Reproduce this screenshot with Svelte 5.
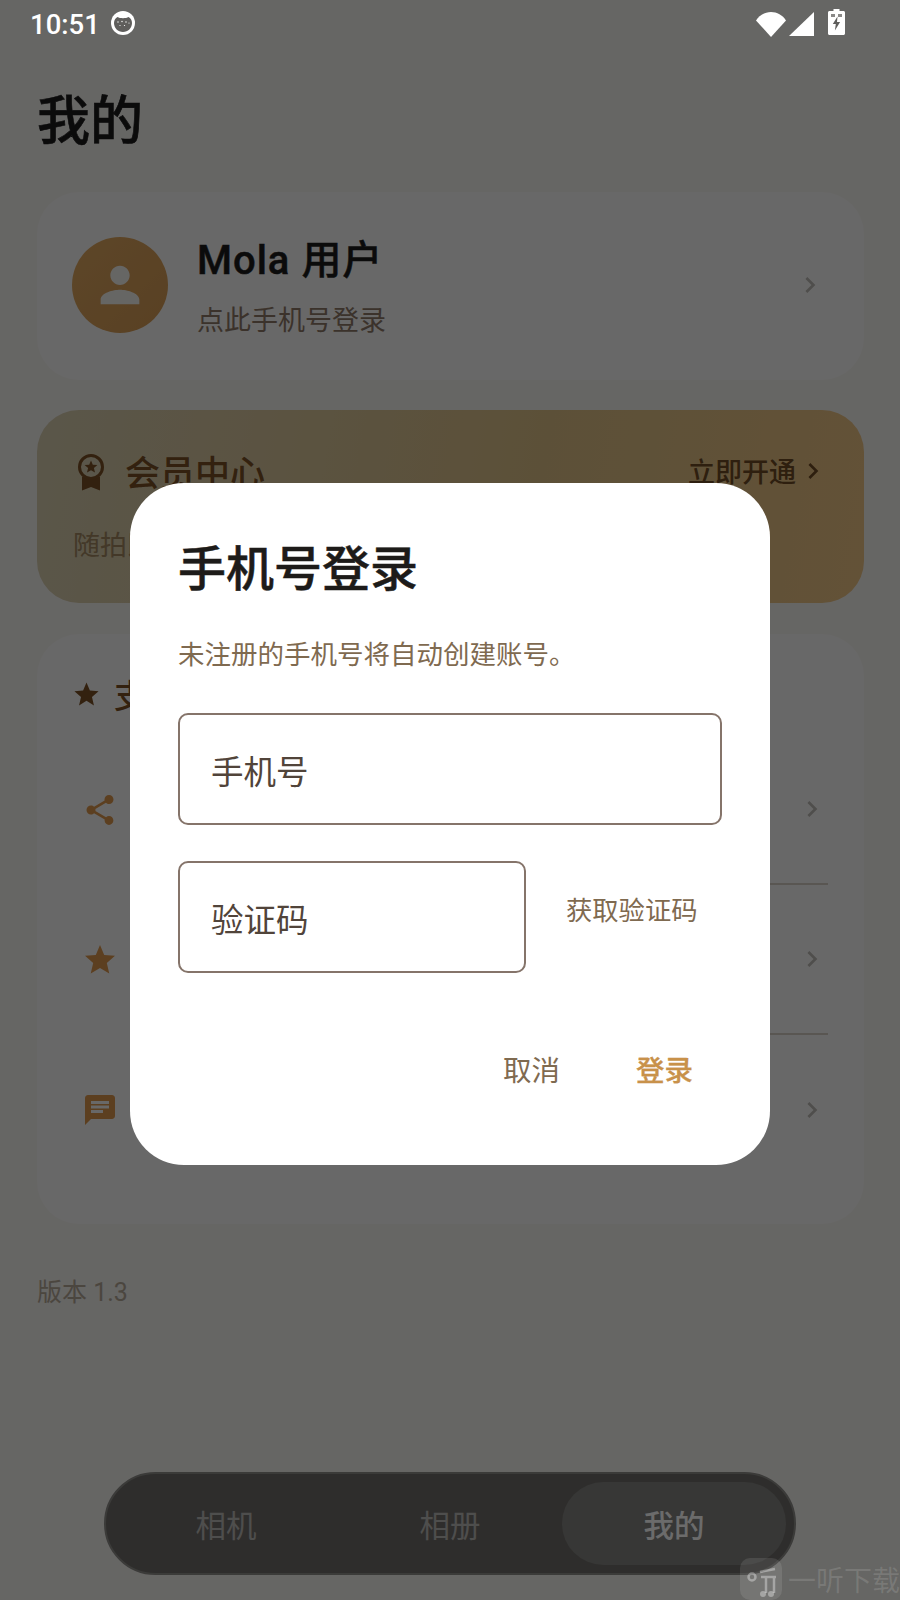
<script>
  const tabs = [
    { label: '相机', active: false },
    { label: '相册', active: false },
    { label: '我的', active: true }
  ];

  const person = 'M12 12c2.21 0 4-1.79 4-4s-1.79-4-4-4-4 1.79-4 4 1.79 4 4 4zm0 2c-2.67 0-8 1.34-8 4v2h16v-2c0-2.66-5.33-4-8-4z';
  const chevron = 'M10 6L8.59 7.41 13.17 12l-4.58 4.59L10 18l6-6z';
  const star = 'M12 17.27L18.18 21l-1.64-7.03L22 9.24l-7.19-.61L12 2 9.19 8.63 2 9.24l5.46 4.73L5.82 21z';
  const share = 'M18 16.08c-.76 0-1.44.3-1.96.77L8.91 12.7c.05-.23.09-.46.09-.7s-.04-.47-.09-.7l7.05-4.11c.54.5 1.25.81 2.04.81 1.66 0 3-1.34 3-3s-1.34-3-3-3-3 1.34-3 3c0 .24.04.47.09.7L8.04 9.81C7.5 9.31 6.79 9 6 9c-1.66 0-3 1.34-3 3s1.34 3 3 3c.79 0 1.5-.31 2.04-.81l7.12 4.16c-.05.21-.08.43-.08.65 0 1.61 1.31 2.92 2.92 2.92 1.61 0 2.92-1.31 2.92-2.92s-1.31-2.92-2.92-2.92z';
  const chat = 'M20 2H4c-1.1 0-1.99.9-1.99 2L2 22l4-4h14c1.1 0 2-.9 2-2V4c0-1.1-.9-2-2-2zM6 9h12v2H6V9zm8 5H6v-2h8v2zm4-6H6V6h12v2z';

  const rows = [
    { icon: share, label: '分享给朋友' },
    { icon: star, label: '给我们好评' },
    { icon: chat, label: '意见反馈' }
  ];
</script>

<div class="phone">
  <div class="page">
    <h1>我的</h1>

    <section class="card user">
      <div class="avatar">
        <svg viewBox="0 0 24 24" width="58" height="58"><path d={person} fill="#f4f2ef" /></svg>
      </div>
      <div class="who">
        <div class="name">Mola 用户</div>
        <div class="hint">点此手机号登录</div>
      </div>
      <svg class="chev" viewBox="0 0 24 24" width="32" height="32"><path d={chevron} /></svg>
    </section>

    <section class="member">
      <div class="member-top">
        <svg class="medal" viewBox="0 0 28 38" width="28" height="38">
          <path d="M5 24v13.500l9-3.500 9 3.500V24z" fill="#7a4f24" />
          <circle cx="14" cy="14" r="11.500" fill="#d6cdb0" stroke="#7a4f24" stroke-width="3" />
          <path d="M14 7.500l1.800 4.200 4.600.4-3.500 3 1.100 4.500-4-2.400-4 2.400 1.100-4.500-3.500-3 4.600-.4z" fill="#7a4f24" />
        </svg>
        <span class="member-title">会员中心</span>
        <span class="open">立即开通</span>
        <svg class="open-chev" viewBox="0 0 24 24" width="32" height="32"><path d={chevron} /></svg>
      </div>
      <p class="member-desc">随拍即得专业胶片质感</p>
    </section>

    <section class="card support">
      <div class="support-head">
        <svg viewBox="0 0 24 24" width="29" height="29"><path d={star} /></svg>
        <span>支持我们</span>
      </div>
      {#each rows as row}
        <div class="row">
          <svg class="row-icon" viewBox="0 0 24 24" width="36" height="36"><path d={row.icon} /></svg>
          <div class="row-body">
            <span class="row-label">{row.label}</span>
            <svg class="chev" viewBox="0 0 24 24" width="32" height="32"><path d={chevron} /></svg>
          </div>
        </div>
      {/each}
    </section>

    <div class="version">版本 1.3</div>

    <nav class="tabs">
      {#each tabs as tab}
        <div class="tab" class:active={tab.active}>{tab.label}</div>
      {/each}
    </nav>
  </div>

  <div class="scrim">
    <div class="dialog">
      <h2>手机号登录</h2>
      <p class="note">未注册的手机号将自动创建账号。</p>
      <div class="field wide">手机号</div>
      <div class="code-row">
        <div class="field short">验证码</div>
        <span class="get-code">获取验证码</span>
      </div>
      <div class="actions">
        <span class="cancel">取消</span>
        <span class="login">登录</span>
      </div>
    </div>
  </div>

  <header class="status">
    <span class="time">10:51</span>
    <svg class="cat" viewBox="0 0 24 24" width="24" height="24">
      <circle cx="12" cy="12" r="12" fill="#fff" />
      <path d="M3 12c0-3 1.500-5 3.500-6 1.500.8 3 1.200 5.500 1.200s4-.4 5.500-1.200c2 1 3.500 3 3.500 6 0 5-4 9-9 9s-9-4-9-9z" fill="#5f5e5c" />
      <g fill="#fff">
        <circle cx="7" cy="11" r=".7" /><circle cx="11" cy="10.500" r=".7" /><circle cx="15" cy="11" r=".7" />
        <circle cx="18" cy="12" r=".6" /><circle cx="9" cy="14.500" r=".6" /><circle cx="13.500" cy="14.500" r=".6" />
      </g>
    </svg>
    <span class="spacer"></span>
    <svg viewBox="0 0 30 25" width="30" height="25"><path d="M0 8.500C3.500 3 9 0 15 0s11.500 3 15 8.500L15 25z" fill="#fff" /></svg>
    <svg class="signal" viewBox="0 0 25 24" width="25" height="24"><path d="M25 0v24H0z" fill="#fff" /></svg>
    <svg class="battery" viewBox="0 0 17 26" width="17" height="26">
      <path d="M5.500 0h6v2H15.500c.8 0 1.500.7 1.500 1.500v21c0 .8-.7 1.500-1.500 1.500h-14C.7 26 0 25.300 0 24.500v-21C0 2.700.7 2 1.500 2h4z" fill="#fff" />
      <path d="M3 5h4v3H3zM10 5h4v3h-4z" fill="#8a8987" />
      <path d="M9.500 7.500L4.800 15h3l-.9 6.500 5.200-8.500H9z" fill="#5f5e5c" />
    </svg>
  </header>

  <div class="watermark">
    <div class="wm-logo">
      <svg viewBox="0 0 42 42" width="42" height="42">
        <circle cx="12" cy="19" r="3.500" fill="none" stroke="#fff" stroke-opacity=".35" stroke-width="2.500" />
        <path d="M20 14l15-3M21 19h15M26 19v16M34 19v16" fill="none" stroke="#fff" stroke-opacity=".35" stroke-width="2.500" />
        <circle cx="23" cy="36" r="3" fill="#fff" fill-opacity=".35" />
        <circle cx="31" cy="36" r="3" fill="#fff" fill-opacity=".35" />
      </svg>
    </div>
    <span>一听下载</span>
  </div>
</div>

<style>
  :global(body) { margin: 0; }

  .phone {
    position: relative;
    width: 900px;
    height: 1600px;
    overflow: hidden;
    font-family: Roboto, "Noto Sans CJK SC", sans-serif;
  }

  .page {
    position: relative;
    box-sizing: border-box;
    height: 100%;
    padding: 91px 36px 0 37px;
    background: #f4f2ef;
    color: #1d1d1d;
  }

  h1 {
    margin: 0 0 38px;
    font-size: 53px;
    line-height: 63px;
    font-weight: 500;
    -webkit-text-stroke: 0.6px #1c1c1c;
    color: #1c1c1c;
  }

  .card { background: #f8f8f7; border-radius: 42px; }

  .user {
    display: flex;
    align-items: center;
    height: 188px;
    padding: 0 38px 2px 35px;
    box-sizing: border-box;
  }
  .avatar {
    flex: none;
    display: flex;
    align-items: center;
    justify-content: center;
    width: 96px;
    height: 96px;
    border-radius: 50%;
    background: linear-gradient(135deg, #dea760, #d49a55);
  }
  .who { flex: 1; margin-left: 29px; padding-top: 6px; }
  .name { font-size: 40px; line-height: 46px; font-weight: 500; -webkit-text-stroke: 0.5px #1c1c1c; letter-spacing: 1px; color: #1c1c1c; }
  .hint { margin-top: 19px; font-size: 27px; line-height: 36px; color: #8e7868; }
  .chev { fill: #bcb9b5; flex: none; }

  .member {
    box-sizing: border-box;
    height: 193px;
    margin-top: 30px;
    padding: 40px 35px 0 36px;
    border-radius: 42px;
    background: linear-gradient(100deg, #d6cdb0, #dcbf86 60%, #ecc383);
  }
  .member-top { display: flex; align-items: center; height: 40px; }
  .medal { flex: none; margin: 4px 0 0 4px; }
  .member-title { margin-left: 20px; font-size: 35px; font-weight: 500; color: #7a4f24; }
  .open { margin-left: auto; margin-right: -1px; font-size: 27px; font-weight: 500; color: #6e4a24; }
  .open-chev { fill: #6e4a24; flex: none; margin: 2px 0 0 2px; }
  .member-desc { margin: 38px 0 0; font-size: 27px; line-height: 36px; color: #a08660; }

  .support {
    margin-top: 31px;
    height: 590px;
    padding: 30px 36px 0 37px;
    box-sizing: border-box;
  }
  .support-head { display: flex; align-items: center; gap: 13px; height: 71px; font-size: 33px; font-weight: 500; color: #7a4f24; }
  .support-head svg { fill: #7a4f24; margin-left: -2px; margin-top: -11px; }
  .support-head span { margin-top: -11px; }
  .row { display: flex; height: 150px; padding-left: 8px; }
  .row-icon { fill: #dc964c; flex: none; align-self: center; }
  .row-body {
    flex: 1;
    display: flex;
    align-items: center;
    margin-left: 28px;
    border-bottom: 2px solid #d5cdc4;
  }
  .row:last-child .row-body { border-bottom: none; }
  .row-label { flex: 1; font-size: 28px; }

  .version { margin-top: 52px; font-size: 25px; line-height: 34px; color: #b3a796; }

  .tabs {
    position: absolute;
    left: 104px;
    bottom: 25px;
    display: grid;
    grid-template-columns: 1fr 1fr 224px;
    box-sizing: border-box;
    width: 692px;
    height: 103px;
    padding: 8px 8px;
    border: 2px solid #8d8c89;
    border-radius: 52px;
    background: #6f6d69;
  }
  .tab {
    display: flex;
    align-items: center;
    justify-content: center;
    border-radius: 42px;
    font-size: 30.500px;
    color: #bab9b7;
  }
  .tab.active { background: #838381; color: #fff; font-weight: 500; }

  .scrim {
    position: absolute;
    inset: 0;
    display: flex;
    justify-content: center;
    align-items: flex-start;
    padding-top: 483px;
    box-sizing: border-box;
    background: rgba(0, 0, 0, 0.58);
  }

  .dialog {
    box-sizing: border-box;
    width: 640px;
    height: 682px;
    padding: 54px 48px 0;
    border-radius: 54px;
    background: #fff;
  }
  h2 { margin: 0; font-size: 48px; line-height: 66px; font-weight: 500; -webkit-text-stroke: 0.5px #1d1b19; color: #1d1b19; }
  .note { margin: 34px 0 0; font-size: 26.500px; line-height: 36px; color: #7f6a50; }

  .field {
    display: flex;
    align-items: center;
    box-sizing: border-box;
    height: 112px;
    padding: 0 31px;
    border: 2px solid #85746a;
    border-radius: 10px;
    font-size: 32.500px;
    color: #51443a;
  }
  .wide { margin-top: 40px; width: 544px; }
  .code-row { display: flex; margin-top: 36px; }
  .short { width: 348px; }
  .get-code { margin: 33px 0 0 40px; font-size: 26.300px; line-height: 34px; color: #7f6a50; }

  .actions {
    display: flex;
    justify-content: flex-end;
    align-items: center;
    gap: 76px;
    margin-top: 80px;
    padding-right: 29px;
    font-size: 28.500px;
    line-height: 38px;
  }
  .cancel { color: #7f6a50; }
  .login { color: #c8914a; font-weight: 500; -webkit-text-stroke: 0.3px #c8914a; }

  .status {
    position: absolute;
    top: 0;
    left: 30px;
    right: 55px;
    display: flex;
    align-items: center;
    height: 48px;
    color: #fff;
  }
  .time { font-size: 27.500px; font-weight: 500; }
  .cat { margin: -2px 0 0 11px; }
  .spacer { flex: 1; }
  .signal { margin-left: 3px; }
  .battery { margin-left: 14px; margin-top: -5px; }

  .watermark {
    position: absolute;
    left: 740px;
    bottom: 0;
    display: flex;
    align-items: center;
    gap: 6px;
    white-space: nowrap;
    font-size: 28px;
    color: rgba(255, 255, 255, 0.13);
  }
  .wm-logo { width: 42px; height: 42px; border-radius: 10px; background: rgba(255, 255, 255, 0.1); }
  .wm-logo svg { display: block; }
</style>
